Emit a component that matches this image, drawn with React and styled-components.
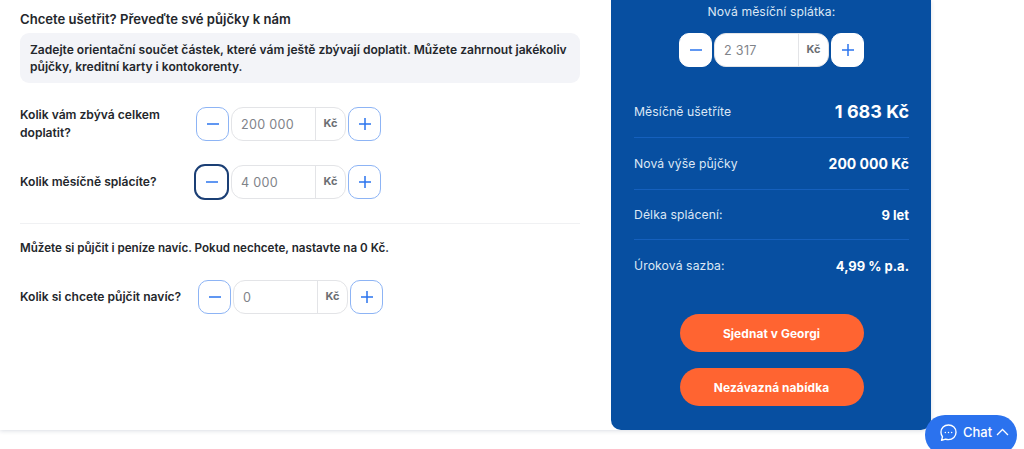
import React from "react";
import styled, { createGlobalStyle } from "styled-components";

const Global = createGlobalStyle`
  html, body { margin: 0; padding: 0; background: #fff; height: 449px; overflow: hidden; }
  * { box-sizing: border-box; }
  body { font-family: Inter, "Liberation Sans", sans-serif; color: #24272c; }
`;
const Page = styled.div`position: relative; width: 1024px; height: 449px; overflow: hidden;`;
const Card = styled.div`
  width: 931px; height: 430px; display: flex; justify-content: space-between;
  background: #fff; border-radius: 0 0 10px 0; box-shadow: 0 1px 4px rgba(30,50,90,.16);
`;
const Left = styled.section`width: 611px; padding: 11px 31px 0 20px;`;
const Heading = styled.h2`margin: 0; font-size: 13.1px; line-height: 16px; font-weight: 600;`;
const Info = styled.div`
  margin-top: 6px; height: 50px; padding: 8px 10px; background: #f3f4f8; border-radius: 9px;
  font-size: 12.05px; line-height: 17px; font-weight: 600;
`;
const Row = styled.div`
  display: flex; align-items: center; margin-top: ${p => p.$top}px;
`;
const Label = styled.label`
  width: ${p => p.$width}px; flex: none; font-size: 12.1px; line-height: 18px; font-weight: 600; padding-right: 12px;
`;
const Stepper = styled.div`display: flex; align-items: center; gap: 2px;`;
const StepButton = styled.button`
  width: 33px; height: 34px; padding: 0; display: flex; align-items: center; justify-content: center;
  background: #fff; border-radius: 10px; color: #2b74ee;
  border: ${p => p.$focused ? "2px solid #1b3f75" : p.$plain ? "1px solid #fff" : "1px solid #8db4f5"};
  ${p => p.$focused && "height: 36px; width: 35px; margin: -1px; border-radius: 11px; position: relative; left: -1px;"}
`;
const Field = styled.div`
  width: 115px; height: 34px; display: flex; background: #fff; border: 1px solid #e3e4e7; border-radius: 12px;
`;
const Value = styled.div`
  flex: 1; padding-left: 9px; display: flex; align-items: center; font-size: 12.6px; color: #7f8389; letter-spacing: .3px;
`;
const Unit = styled.div`
  width: 30px; border-left: 1px solid #e3e4e7; display: flex; align-items: center; justify-content: center;
  font-size: 11px; font-weight: 700; color: #6b6e73; padding-bottom: 2px;
`;
const Divider = styled.hr`margin: 24px 0 0; border: 0; border-top: 1px solid #f0f1f3;`;
const SubHeading = styled(Heading)`margin-top: 16px; font-size: 11.63px; white-space: nowrap;`;
const Panel = styled.aside`
  width: 320px; height: 430px; padding: 4px 22px 0 23px; background: #074fa1; border-radius: 0 0 10px 10px;
  color: #fff; display: flex; flex-direction: column;
`;
const PanelTitle = styled.div`text-align: center; font-size: 12.2px; line-height: 16px; color: #dce7f5; letter-spacing: .1px;`;
const PanelStepper = styled.div`display: flex; justify-content: center; margin-top: 13px; margin-bottom: 18px;`;
const Stat = styled.div`
  height: ${p => p.$height}px; display: flex; align-items: center; justify-content: space-between;
  border-bottom: ${p => p.$last ? "0" : "1px solid #1560bd"};
`;
const StatLabel = styled.span`font-size: 12.2px; color: #dce7f5; letter-spacing: .1px;`;
const StatValue = styled.strong`font-size: ${p => p.$size}px; font-weight: 700; color: #fff;`;
const Actions = styled.div`display: flex; flex-direction: column; align-items: center; gap: 16px; margin-top: 23px;`;
const Cta = styled.button`
  width: 184px; height: 38px; border: 0; border-radius: 20px; background: #ff6431; color: #fff;
  font-family: inherit; font-size: 11.9px; font-weight: 700; letter-spacing: .1px;
`;
const Chat = styled.button`
  position: absolute; left: 925px; top: 415px; width: 92px; height: 40px; border: 0; border-radius: 20px;
  background: #2b72ee; color: #fff; display: flex; align-items: center; padding: 0 0 6px 14px; gap: 5px;
  font-family: inherit; font-size: 13px; font-weight: 500;
`;
const ChatChevron = styled.svg`margin-left: -1px;`;

const Minus = () => (
  <svg width="12" height="12" viewBox="0 0 12 12"><path d="M0 6H12" stroke="currentColor" strokeWidth="1.5" /></svg>
);
const Plus = () => (
  <svg width="12" height="12" viewBox="0 0 12 12"><path d="M0 6H12M6 0V12" stroke="currentColor" strokeWidth="1.5" /></svg>
);

const NumberStepper = ({ value, focused, plain }) => (
  <Stepper>
    <StepButton $focused={focused} $plain={plain} aria-label="minus"><Minus /></StepButton>
    <Field>
      <Value>{value}</Value>
      <Unit>Kč</Unit>
    </Field>
    <StepButton $plain={plain} aria-label="plus"><Plus /></StepButton>
  </Stepper>
);

export default function App() {
  return (
    <Page>
      <Global />
      <Card>
        <Left>
          <Heading>Chcete ušetřit? Převeďte své půjčky k nám</Heading>
          <Info>Zadejte orientační součet částek, které vám ještě zbývají doplatit. Můžete zahrnout jakékoliv půjčky, kreditní karty i kontokorenty.</Info>
          <Row $top={23}>
            <Label $width={176}>Kolik vám zbývá celkem doplatit?</Label>
            <NumberStepper value="200 000" />
          </Row>
          <Row $top={23}>
            <Label $width={176}>Kolik měsíčně splácíte?</Label>
            <NumberStepper value="4 000" focused />
          </Row>
          <Divider />
          <SubHeading>Můžete si půjčit i peníze navíc. Pokud nechcete, nastavte na 0 Kč.</SubHeading>
          <Row $top={24}>
            <Label $width={178}>Kolik si chcete půjčit navíc?</Label>
            <NumberStepper value="0" />
          </Row>
        </Left>
        <Panel>
          <PanelTitle>Nová měsíční splátka:</PanelTitle>
          <PanelStepper><NumberStepper value="2 317" plain /></PanelStepper>
          <Stat $height={53}><StatLabel>Měsíčně ušetříte</StatLabel><StatValue $size={18}>1 683 Kč</StatValue></Stat>
          <Stat $height={52}><StatLabel>Nová výše půjčky</StatLabel><StatValue $size={14}>200 000 Kč</StatValue></Stat>
          <Stat $height={50}><StatLabel>Délka splácení:</StatLabel><StatValue $size={13}>9 let</StatValue></Stat>
          <Stat $height={51} $last><StatLabel>Úroková sazba:</StatLabel><StatValue $size={13}>4,99 % p.a.</StatValue></Stat>
          <Actions>
            <Cta>Sjednat v Georgi</Cta>
            <Cta>Nezávazná nabídka</Cta>
          </Actions>
        </Panel>
      </Card>
      <Chat>
        <svg width="19" height="19" viewBox="0 0 24 24" fill="none" stroke="currentColor" strokeWidth="1.7">
          <path d="M12 2.500c5.500 0 9.500 4 9.500 9.200s-4 9.300-9.500 9.300c-1.300 0-2.600-.2-3.700-.7L3.200 22l1.200-4.600C3.200 15.800 2.500 13.900 2.500 11.700 2.500 6.500 6.500 2.500 12 2.500Z" strokeLinejoin="round" />
          <circle cx="8" cy="12" r=".9" fill="currentColor" stroke="none" />
          <circle cx="12" cy="12" r=".9" fill="currentColor" stroke="none" />
          <circle cx="16" cy="12" r=".9" fill="currentColor" stroke="none" />
        </svg>
        <span>Chat</span>
        <ChatChevron width="13" height="8" viewBox="0 0 13 8" fill="none" stroke="currentColor" strokeWidth="1.3"><path d="M1 7L6.500 1.500 12 7" /></ChatChevron>
      </Chat>
    </Page>
  );
}
